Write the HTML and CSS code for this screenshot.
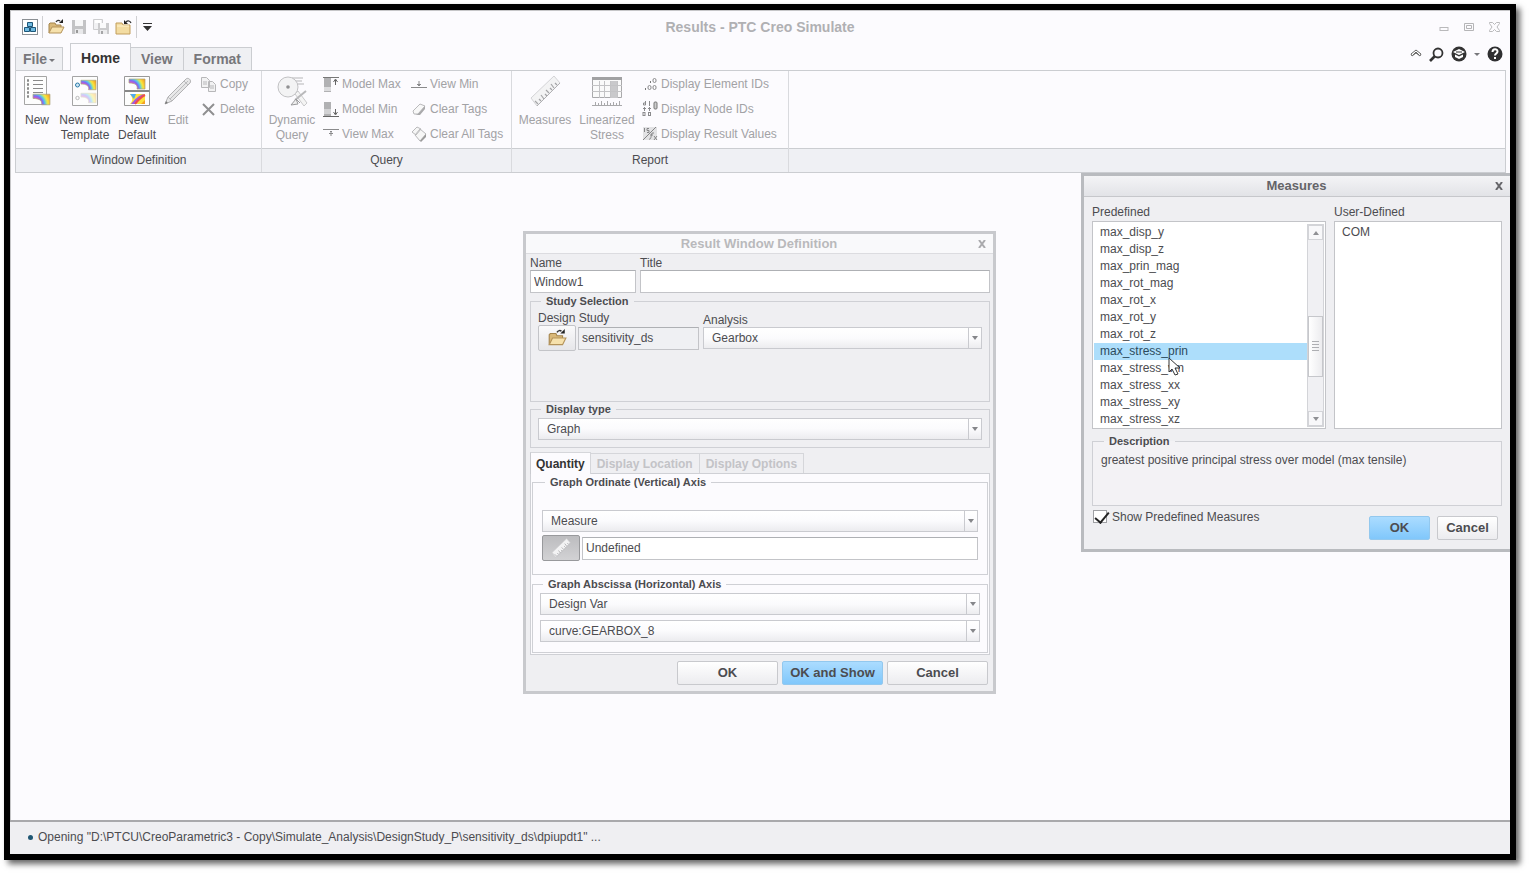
FILE: index.html
```
<!DOCTYPE html>
<html lang="en">

<head>
    <meta charset="UTF-8">
    <meta name="viewport" content="width=device-width, initial-scale=1.0">
    <title>Results - PTC Creo Simulate</title>
    <link rel="stylesheet" href="styles.css">
</head>

<body>
    <!-- shared icon shapes -->
    <svg class="defs" aria-hidden="true">
        <defs>
            <radialGradient id="heat" gradientUnits="userSpaceOnUse" cx="2" cy="11" r="17">
                <stop offset="0.3" stop-color="#f08a9a" />
                <stop offset="0.4" stop-color="#c25ad6" />
                <stop offset="0.5" stop-color="#7f6cf0" />
                <stop offset="0.6" stop-color="#55c0f2" />
                <stop offset="0.7" stop-color="#b6e47c" />
                <stop offset="0.78" stop-color="#fbe23c" />
                <stop offset="1" stop-color="#f5a022" />
            </radialGradient>
            <linearGradient id="metal" x1="0" y1="0" x2="1" y2="1">
                <stop offset="0" stop-color="#ffffff" />
                <stop offset="1" stop-color="#cfcfd1" />
            </linearGradient>
            <symbol id="contour" viewBox="0 0 18 12">
                <path d="M1 1h16v10H9c1-4-2-6-8-6z" fill="url(#heat)" />
                <path d="M1 1h16v10H9c1-4-2-6-8-6z" fill="none" stroke="#a9a27a" stroke-width="0.7" />
            </symbol>
            <symbol id="folder" viewBox="0 0 18 16">
                <path d="M2 14V5l1-1h5l1 2h5v3" fill="#d9b878" stroke="#a5854c" />
                <path d="M2 14l3-6h12l-3 6z" fill="#f6e1ac" stroke="#b4935a" />
                <path d="M9 3c1-2 3-2 4-1" fill="none" stroke="#333" stroke-width="1.3" />
                <path d="M12 4h4V0z" fill="#222" />
            </symbol>
            <symbol id="ruler" viewBox="0 0 32 32">
                <path d="M2 23L25 1l6 7L8 31z" fill="#f3f3f4" stroke="#d3d3d6" />
                <path d="M8 31L31 8" stroke="#b1b1b4" />
                <path d="M9 29l-3-3M12 26l-2-2M15 24l-3-4M18 21l-2-2M20 18l-3-3M23 15l-2-2M25 13l-3-4M28 10l-2-2" stroke="#a4a4a7" stroke-width="1.2" />
            </symbol>
            <symbol id="eraser" viewBox="0 0 16 14">
                <path d="M2 9l7-7 5 2-7 8H3z" fill="#f8f8f8" stroke="#b9b9bb" />
                <path d="M7 12l7-8v3l-5 6H4" fill="#a9a9ab" />
            </symbol>
        </defs>
    </svg>

    <main class="window">
        <header class="titlebar">
            <div class="quick-access">
                <button class="tool app-tool" aria-label="Application menu">
                    <svg width="16" height="16" viewBox="0 0 16 16">
                        <rect x="0.5" y="0.5" width="15" height="15" fill="#fff" stroke="#8b8f94" />
                        <path d="M5.500 3.500h5v4h-5zM2.500 8.500h5v4h-5zM8.500 8.500h5v4h-5z" fill="#6fb9e0" stroke="#1d5679" />
                    </svg>
                </button>
                <span class="divider"></span>
                <button class="tool" aria-label="Open"><svg width="18" height="16"><use href="#folder" /></svg></button>
                <button class="tool" aria-label="Save" disabled>
                    <svg width="16" height="16" viewBox="0 0 16 16">
                        <path d="M1 1h14v14H1z" fill="#c3c3c5" />
                        <path d="M4 1h8v6H4z" fill="#f7f7f8" />
                        <path d="M4 10h8v5H4z" fill="#e9e9eb" />
                        <path d="M5 11h2v3H5z" fill="#999" />
                    </svg>
                </button>
                <button class="tool" aria-label="Save a copy" disabled>
                    <svg width="16" height="16" viewBox="0 0 16 16">
                        <path d="M0.500 0.500h9v10h-9z" fill="#f1f1f3" stroke="#cdcdcf" />
                        <path d="M2 1h6v3H2z" fill="#fff" />
                        <path d="M5 4h11v11H5z" fill="#cbcbcd" />
                        <path d="M7 4h6v5H7z" fill="#fafafb" />
                        <path d="M7 11h7v4H7z" fill="#ececee" />
                        <path d="M8 12h2v3H8z" fill="#a5a5a7" />
                    </svg>
                </button>
                <button class="tool" aria-label="Close results">
                    <svg width="17" height="16" viewBox="0 0 17 16">
                        <path d="M1 15V4h6l1 2h7v9z" fill="#f3dca2" stroke="#c29e5c" />
                        <path d="M2 7h12" stroke="#fff3cf" />
                        <path d="M11 3c2-2 4-1 5 1" fill="none" stroke="#333" stroke-width="1.3" />
                        <path d="M9 1v4h4z" fill="#222" />
                    </svg>
                </button>
                <span class="divider"></span>
                <button class="tool more-tool" aria-label="Customize toolbar">
                    <svg width="9" height="8" viewBox="0 0 9 8"><path d="M0 0h9v1H0zM0 3h9L4.500 8z" fill="#333" /></svg>
                </button>
            </div>
            <h1>Results - PTC Creo Simulate</h1>
            <div class="window-controls">
                <button class="tool" aria-label="Minimize"><svg width="10" height="12" viewBox="0 0 10 12"><rect x="1" y="6.500" width="8" height="3" fill="none" stroke="#b9b9bb" /></svg></button>
                <button class="tool" aria-label="Restore"><svg width="10" height="10" viewBox="0 0 10 10"><path d="M0.500 1.500h9v7h-9zM2.500 3.500h5v3h-5z" fill="none" stroke="#b5b5b7" /></svg></button>
                <button class="tool" aria-label="Close"><svg width="11" height="10" viewBox="0 0 11 10"><path d="M0.500 0.500h3l2 2 2-2h3v1L8 5l2.500 3.500v1h-3l-2-2-2 2h-3v-1L3 5 0.500 1.500z" fill="none" stroke="#b9b9bb" /></svg></button>
            </div>
        </header>

        <nav class="tab-row">
            <button class="tab file-tab">File <span class="caret"></span></button>
            <button class="tab active">Home</button>
            <button class="tab">View</button>
            <button class="tab">Format</button>
            <div class="help-tools">
                <button class="tool" aria-label="Collapse ribbon"><svg width="12" height="10" viewBox="0 0 12 10"><path d="M1 5l5-4 5 4-1 2-4-3-4 3zM3 6l3-3 3 3" fill="#fff" stroke="#666" /></svg></button>
                <button class="tool" aria-label="Search"><svg width="15" height="15" viewBox="0 0 15 15"><circle cx="9" cy="6" r="4.500" fill="none" stroke="#333" stroke-width="1.800" /><path d="M6 9l-5 5" stroke="#333" stroke-width="2.600" /></svg></button>
                <button class="tool" aria-label="Learning">
                    <svg width="16" height="16" viewBox="0 0 16 16"><circle cx="8" cy="8" r="7.500" fill="#333" /><path d="M8 3l6 3-6 3-6-3z" fill="#fff" /><path d="M4 8.500l4 2 4-2V11l-4 2-4-2z" fill="#fff" /><path d="M5 6h6" stroke="#333" /></svg>
                </button>
                <span class="caret"></span>
                <button class="tool" aria-label="Help"><svg width="16" height="16" viewBox="0 0 16 16"><circle cx="8" cy="8" r="7.500" fill="#2f2f31" /><path d="M5.500 6c0-3.500 5-3.500 5-.5 0 2-2.500 2-2.500 4" fill="none" stroke="#fff" stroke-width="2" /><path d="M7 11h2v2H7z" fill="#fff" /></svg></button>
            </div>
        </nav>

        <section class="ribbon">
            <div class="group definition-group">
                <div class="group-tools">
                    <button class="big-tool new-tool">
                        <svg width="28" height="32" viewBox="0 0 28 32">
                            <path d="M1.500 1.500h22v28h-22z" fill="#fdfdfd" stroke="#a5a5a5" />
                            <path d="M10 5.500h10M10 9.500h10M10 13.500h10M10 17.500h10" stroke="#8a8a8a" />
                            <path d="M4 5.500h3M4 9.500h3M4 13.500h3M4 17.500h3M4 21.500h3" stroke="#8a8a8a" stroke-width="2.400" stroke-dasharray="2 1" />
                            <use href="#contour" x="9" y="18" width="19" height="13" />
                        </svg>
                        <span>New</span>
                    </button>
                    <button class="big-tool template-tool">
                        <svg width="28" height="32" viewBox="0 0 28 32">
                            <path d="M1.500 1.500h25v29h-25z" fill="#fdfdfd" stroke="#a5a5a5" />
                            <circle cx="6.500" cy="10" r="2" fill="#cfe7f5" stroke="#2d7ba8" />
                            <use href="#contour" x="9" y="4" width="17" height="12" />
                            <circle cx="6.500" cy="23" r="1.700" fill="none" stroke="#b9b9b9" />
                            <use href="#contour" x="9" y="17" width="17" height="12" opacity="0.35" />
                        </svg>
                        <span>New from<br>Template</span>
                    </button>
                    <button class="big-tool default-tool">
                        <svg width="28" height="32" viewBox="0 0 28 32">
                            <path d="M1.500 1.500h25v14h-25zM1.500 16.500h25v14h-25z" fill="#fdfdfd" stroke="#999" />
                            <path d="M1 16h26" stroke="#777" />
                            <use href="#contour" x="5" y="3" width="18" height="12" />
                            <path d="M7 19h15v10H7c4-4 2-7 0-10z" fill="#fbe23c" />
                            <path d="M7 19h6l-2 5c-1-1-3-4-4-5z" fill="#4fa8ee" />
                            <path d="M8 29c3-4 8-9 13-10l-8 10z" fill="#a05be0" />
                            <path d="M12 29c3-4 6-7 10-9" fill="none" stroke="#ee4e4e" stroke-width="2" />
                            <path d="M18 29l4-4v4z" fill="#f5a022" />
                        </svg>
                        <span>New<br>Default</span>
                    </button>
                    <button class="big-tool edit-tool" disabled>
                        <svg width="28" height="32" viewBox="0 0 28 32">
                            <path d="M1 29l3-7L22 4c2-2 6 1 4 4L8 26z" fill="url(#metal)" stroke="#b1b1b3" />
                            <path d="M4 22l4 4M20 6l4 4M6 24L24 6" stroke="#bdbdbf" />
                            <path d="M1 29l1-3 2 2z" fill="#777" />
                        </svg>
                        <span>Edit</span>
                    </button>
                    <div class="small-tools">
                        <button class="small-tool" disabled>
                            <svg width="16" height="16" viewBox="0 0 16 16"><path d="M0.500 1.500h5l3 3v7h-8zM7.500 5.500h4l3 3v7h-7z" fill="#f2f2f3" stroke="#b7b7b9" /><path d="M2 6h4M2 8h4M9 10h4M9 12h4" stroke="#b7b7b9" /></svg>
                            Copy
                        </button>
                        <button class="small-tool" disabled>
                            <svg width="16" height="16" viewBox="0 0 16 16"><path d="M2 3l11 11M13 3L2 14" stroke="#8f8f91" stroke-width="2" /></svg>
                            Delete
                        </button>
                    </div>
                </div>
                <h2>Window Definition</h2>
            </div>

            <div class="group query-group">
                <div class="group-tools">
                    <button class="big-tool query-tool" disabled>
                        <svg width="32" height="32" viewBox="0 0 32 32">
                            <path d="M16 3h11M18 6h8M20 9h8" stroke="#b5b5b7" />
                            <circle cx="12" cy="12" r="10" fill="#f3f3f4" stroke="#c1c1c3" />
                            <circle cx="12" cy="12" r="1.800" fill="#8f8f91" />
                            <path d="M19 19l3-3 9 12-3 3z" fill="#f4f4f4" stroke="#c9c9cb" />
                            <path d="M19 25l11-9" stroke="#b9b9bb" stroke-width="2" />
                            <path d="M15 30l5-6 2 5zM20 24l4 4" fill="#eee" stroke="#9b9b9d" />
                        </svg>
                        <span>Dynamic<br>Query</span>
                    </button>
                    <div class="small-tools model-tools">
                        <button class="small-tool" disabled>
                            <svg width="16" height="16" viewBox="0 0 16 16"><path d="M0 1.500h16" stroke="#777" /><path d="M1 2h7v14H1z" fill="#b1b1b3" /><path d="M1 11h7v4H1z" fill="#dcdcde" /><path d="M12.500 9V4M10.500 6l2-3 2 3" fill="none" stroke="#666" /></svg>
                            Model Max
                        </button>
                        <button class="small-tool" disabled>
                            <svg width="16" height="16" viewBox="0 0 16 16"><path d="M1 1h7v14H1z" fill="#b1b1b3" /><path d="M1 8h7v5H1z" fill="#d2d2d4" /><path d="M0 15.500h16M12.500 8v5M10.500 11l2 3 2-3" fill="none" stroke="#666" /></svg>
                            Model Min
                        </button>
                        <button class="small-tool" disabled>
                            <svg width="16" height="16" viewBox="0 0 16 16"><path d="M0 3.500h16M8 5v5M6 7.500h4M7 6l1-1 1 1" fill="none" stroke="#8a8a8c" /></svg>
                            View Max
                        </button>
                    </div>
                    <div class="small-tools">
                        <button class="small-tool" disabled>
                            <svg width="16" height="16" viewBox="0 0 16 16"><path d="M0 11.500h16M8 5v5M6 8.500h4M7 9l1 1 1-1" fill="none" stroke="#8a8a8c" /></svg>
                            View Min
                        </button>
                        <button class="small-tool" disabled>
                            <svg width="16" height="14"><use href="#eraser" /></svg>
                            Clear Tags
                        </button>
                        <button class="small-tool" disabled>
                            <svg width="16" height="16" viewBox="0 0 16 16"><path d="M1 6l5-5 4 2-5 6zM4 9l5-6 6 5-6 7z" fill="#f6f6f6" stroke="#b9b9bb" /><path d="M9 15l6-7v3l-5 5z" fill="#999" /></svg>
                            Clear All Tags
                        </button>
                    </div>
                </div>
                <h2>Query</h2>
            </div>

            <div class="group report-group">
                <div class="group-tools">
                    <button class="big-tool measures-tool" disabled>
                        <svg width="32" height="32"><use href="#ruler" /></svg>
                        <span>Measures</span>
                    </button>
                    <button class="big-tool stress-tool" disabled>
                        <svg width="32" height="32" viewBox="0 0 32 32">
                            <path d="M1.500 2.500h29v20h-29z" fill="#fafafa" stroke="#a9a9ab" />
                            <path d="M1 2h30v3H1z" fill="#a1a1a3" />
                            <path d="M19 6h7v17h-7z" fill="#c9c9cb" />
                            <path d="M1 10.500h30M1 16.500h30M8.500 6v17M13.500 6v17M19.500 6v17M26.500 6v17" stroke="#c3c3c5" />
                            <path d="M1 30.500h30M4.500 27v3M7.500 28v2M10.500 26v4M13.500 28v2M16.500 26v4M19.500 28v2M22.500 27v3M25.500 28v2M28.500 26v4" stroke="#a9a9ab" />
                        </svg>
                        <span>Linearized<br>Stress</span>
                    </button>
                    <div class="small-tools">
                        <button class="small-tool" disabled>
                            <svg width="16" height="16" viewBox="0 0 16 16"><path d="M3 13h1M8 6h1" stroke="#777" stroke-width="2" /><rect x="11" y="2.500" width="3" height="4" rx="1.500" fill="none" stroke="#8a8a8c" /><rect x="6" y="9.500" width="3" height="4" rx="1.500" fill="none" stroke="#8a8a8c" /><rect x="11" y="9.500" width="3" height="4" rx="1.500" fill="none" stroke="#8a8a8c" /></svg>
                            Display Element IDs
                        </button>
                        <button class="small-tool" disabled>
                            <svg width="16" height="16" viewBox="0 0 16 16"><path d="M3.500 0v4h-2V2h2M7.500 0v5M2.500 6v4M1 7.500h3M7.500 6v4M6 7.500h3" fill="none" stroke="#8a8a8c" /><rect x="1" y="11.500" width="2" height="3" fill="none" stroke="#8a8a8c" /><rect x="6.500" y="11.500" width="2" height="3" fill="none" stroke="#8a8a8c" /><rect x="12" y="1" width="3" height="7" rx="1" fill="#ccc" stroke="#777" /></svg>
                            Display Node IDs
                        </button>
                        <button class="small-tool" disabled>
                            <svg width="16" height="16" viewBox="0 0 16 16"><path d="M1 1h14v13H1z" fill="#e2e2e4" /><path d="M2.500 2v4M7 2.500H5v2h2v2H5M1 14L14 1M7 13c2 1 2-3 3-6h2M8 9h3M12 10l3 4M15 10l-3 4" fill="none" stroke="#858587" /></svg>
                            Display Result Values
                        </button>
                    </div>
                </div>
                <h2>Report</h2>
            </div>
            <div class="group empty-group"><div class="group-tools"></div><h2></h2></div>
        </section>

        <section class="workspace">
            <form class="dialog result-dialog">
                <header class="dialog-title">
                    <h2>Result Window Definition</h2>
                    <button type="button" class="close-button" aria-label="Close"><svg width="8" height="8" viewBox="0 0 8 8"><path d="M1 0l6 8M7 0L1 8" stroke="currentColor" stroke-width="2" /></svg></button>
                </header>
                <div class="dialog-body">
                    <div class="name-row">
                        <label class="name-field">Name<input type="text" value="Window1"></label>
                        <label class="title-field">Title<input type="text"></label>
                    </div>
                    <fieldset class="study-box">
                        <legend>Study Selection</legend>
                        <div class="study-row">
                            <div class="study-field">
                                <label for="study">Design Study</label>
                                <div class="picker">
                                    <button type="button" class="icon-button" aria-label="Open study"><svg width="20" height="18"><use href="#folder" /></svg></button>
                                    <input type="text" id="study" class="readonly" value="sensitivity_ds" readonly>
                                </div>
                            </div>
                            <div class="analysis-field">
                                <label for="analysis">Analysis</label>
                                <div class="combo"><select id="analysis"><option>Gearbox</option></select></div>
                            </div>
                        </div>
                    </fieldset>
                    <fieldset class="display-box">
                        <legend>Display type</legend>
                        <div class="combo"><select aria-label="Display type"><option>Graph</option></select></div>
                    </fieldset>
                    <div class="dialog-tabs">
                        <button type="button" class="dialog-tab active">Quantity</button>
                        <button type="button" class="dialog-tab" disabled>Display Location</button>
                        <button type="button" class="dialog-tab" disabled>Display Options</button>
                    </div>
                    <div class="tab-panel">
                        <fieldset class="ordinate-box">
                            <legend>Graph Ordinate (Vertical) Axis</legend>
                            <div class="combo"><select aria-label="Ordinate quantity"><option>Measure</option></select></div>
                            <div class="picker">
                                <button type="button" class="icon-button pressed" aria-label="Select measure"><svg width="20" height="20"><use href="#ruler" /></svg></button>
                                <input type="text" aria-label="Selected measure" value="Undefined">
                            </div>
                        </fieldset>
                        <fieldset class="abscissa-box">
                            <legend>Graph Abscissa (Horizontal) Axis</legend>
                            <div class="combo"><select aria-label="Abscissa quantity"><option>Design Var</option></select></div>
                            <div class="combo"><select aria-label="Design variable"><option>curve:GEARBOX_8</option></select></div>
                        </fieldset>
                    </div>
                    <div class="dialog-buttons">
                        <button type="button" class="push">OK</button>
                        <button type="button" class="push primary">OK and Show</button>
                        <button type="button" class="push">Cancel</button>
                    </div>
                </div>
            </form>

            <form class="dialog measures-dialog">
                <header class="dialog-title">
                    <h2>Measures</h2>
                    <button type="button" class="close-button" aria-label="Close"><svg width="8" height="8" viewBox="0 0 8 8"><path d="M1 0l6 8M7 0L1 8" stroke="currentColor" stroke-width="2" /></svg></button>
                </header>
                <div class="dialog-body">
                    <div class="lists">
                        <div class="predefined">
                            <h3 id="predefined-label">Predefined</h3>
                            <div class="list-box">
                                <ul role="listbox" aria-labelledby="predefined-label">
                                    <li role="option">max_disp_y</li>
                                    <li role="option">max_disp_z</li>
                                    <li role="option">max_prin_mag</li>
                                    <li role="option">max_rot_mag</li>
                                    <li role="option">max_rot_x</li>
                                    <li role="option">max_rot_y</li>
                                    <li role="option">max_rot_z</li>
                                    <li role="option" class="selected" aria-selected="true">max_stress_prin</li>
                                    <li role="option">max_stress_vm</li>
                                    <li role="option">max_stress_xx</li>
                                    <li role="option">max_stress_xy</li>
                                    <li role="option">max_stress_xz</li>
                                </ul>
                                <div class="scrollbar">
                                    <button type="button" class="scroll-button up" aria-label="Scroll up"></button>
                                    <div class="track"><div class="thumb"></div></div>
                                    <button type="button" class="scroll-button down" aria-label="Scroll down"></button>
                                </div>
                            </div>
                        </div>
                        <div class="user-defined">
                            <h3 id="user-label">User-Defined</h3>
                            <div class="list-box">
                                <ul role="listbox" aria-labelledby="user-label">
                                    <li role="option">COM</li>
                                </ul>
                            </div>
                        </div>
                    </div>
                    <fieldset class="description-box">
                        <legend>Description</legend>
                        <p>greatest positive principal stress over model (max tensile)</p>
                    </fieldset>
                    <div class="measures-footer">
                        <label class="check"><input type="checkbox" checked>Show Predefined Measures</label>
                        <div class="dialog-buttons">
                            <button type="button" class="push primary">OK</button>
                            <button type="button" class="push">Cancel</button>
                        </div>
                    </div>
                </div>
                <svg class="pointer" width="14" height="20" viewBox="0 0 14 20" aria-hidden="true"><path d="M1 1v14l3-3 3 6 3-1-3-6h5z" fill="#fff" stroke="#333" /></svg>
            </form>
        </section>

        <footer class="status">
            <span class="dot"></span>
            <p>Opening "D:\PTCU\CreoParametric3 - Copy\Simulate_Analysis\DesignStudy_P\sensitivity_ds\dpiupdt1" ...</p>
        </footer>
    </main>
</body>

</html>
```
FILE: styles.css
```
* {
    box-sizing: border-box;
}

body {
    display: flex;
    min-height: 100vh;
    margin: 0;
    padding: 4px 13px 13px 4px;
    background: #fff;
    color: #4c4c50;
    font-family: "Liberation Sans", Arial, sans-serif;
    font-size: 12px;
    line-height: 14px;
}

h1, h2, h3, p, ul {
    margin: 0;
    padding: 0;
    font-size: 12px;
    font-weight: normal;
}

button, input, select {
    margin: 0;
    color: inherit;
    font: inherit;
}

.defs {
    position: absolute;
    width: 0;
    height: 0;
}

.window {
    flex: 1;
    display: flex;
    flex-direction: column;
    min-width: 0;
    border: 6px solid #000;
    background: #fcfbfe;
    box-shadow: 4px 4px 6px rgba(0, 0, 0, 0.6), inset 1px 1px 0 #c6c6c8;
}

/* Title bar */
.titlebar {
    display: grid;
    grid-template-columns: 1fr auto 1fr;
    align-items: center;
    height: 33px;
}

.titlebar h1 {
    color: #b0b0b3;
    font-size: 14px;
    font-weight: bold;
}

.quick-access {
    display: flex;
    align-items: center;
    gap: 6px;
    padding-left: 12px;
}

.tool {
    display: flex;
    padding: 0;
    border: 0;
    background: none;
}

.divider {
    width: 1px;
    height: 22px;
    margin: 0 -2px;
    background: #cfcfd2;
}

.more-tool {
    margin-left: 2px;
}

.window-controls {
    display: flex;
    justify-content: flex-end;
    align-items: center;
    gap: 15px;
    padding-right: 10px;
}

/* Tabs */
.tab-row {
    display: flex;
    align-items: flex-end;
    height: 27px;
    padding: 0 7px 0 5px;
}

.tab {
    height: 23px;
    padding: 0 10px;
    border: 1px solid #cbcdd1;
    border-left: 0;
    border-bottom: 0;
    background: #eff0f3;
    color: #77777b;
    font-size: 14px;
    font-weight: bold;
}

.tab.active {
    position: relative;
    height: 28px;
    margin-bottom: -1px;
    border-left: 1px solid #cbcdd1;
    background: #fcfbfe;
    color: #333;
}

.file-tab {
    margin-right: 7px;
    padding: 0 7px;
    border-left: 1px solid #cbcdd1;
}

.caret {
    display: inline-block;
    border: 3px solid transparent;
    border-top-color: #77777b;
    border-bottom: 0;
    vertical-align: middle;
}

.file-tab .caret {
    margin-left: -2px;
}

.help-tools {
    display: flex;
    align-items: center;
    gap: 7px;
    height: 32px;
    margin-left: auto;
}

/* Ribbon */
.ribbon {
    display: flex;
    margin: 0 4px 0 5px;
    border: 1px solid #cbcdd1;
}

.group {
    display: flex;
    flex-direction: column;
    border-right: 1px solid #d9dade;
}

.definition-group {
    width: 246px;
}

.query-group {
    width: 250px;
}

.report-group {
    width: 277px;
}

.empty-group {
    flex: 1;
    border-right: 0;
}

.group-tools {
    display: flex;
    height: 77px;
    padding-top: 2px;
}

.group h2 {
    height: 24px;
    border-top: 1px solid #cbcdd1;
    background: #eff0f4;
    line-height: 23px;
    text-align: center;
}

.big-tool {
    display: flex;
    flex-direction: column;
    align-items: center;
    gap: 6px;
    padding: 2px 0 0;
    border: 0;
    background: none;
    line-height: 15px;
    white-space: nowrap;
}

.big-tool:disabled,
.small-tool:disabled {
    color: #a2a2a5;
}

.new-tool {
    width: 42px;
}

.template-tool {
    width: 54px;
}

.default-tool {
    width: 50px;
}

.edit-tool {
    width: 32px;
    margin-right: 7px;
}

.query-tool {
    width: 60px;
    margin-right: 1px;
}

.measures-tool {
    width: 66px;
}

.stress-tool {
    width: 58px;
    margin-right: 6px;
}

.small-tools {
    display: flex;
    flex-direction: column;
}

.model-tools {
    width: 88px;
}

.small-tool {
    display: flex;
    align-items: center;
    gap: 3px;
    height: 25px;
    padding: 0 0 4px;
    border: 0;
    background: none;
    white-space: nowrap;
}

/* Workspace and dialogs */
.workspace {
    position: relative;
    flex: 1;
    overflow: hidden;
}

.dialog {
    position: absolute;
    border: 3px solid #c8c9cd;
    background: #efeff2;
}

.dialog-title {
    display: flex;
    align-items: center;
    height: 20px;
    border-bottom: 1px solid #dcdce0;
}

.dialog-title h2 {
    flex: 1;
    padding-left: 14px;
    font-size: 13px;
    font-weight: bold;
    text-align: center;
}

.close-button {
    display: flex;
    padding: 0;
    border: 0;
    background: none;
}

fieldset {
    min-width: 0;
    margin: 0;
    padding: 0;
    border: 1px solid #cfd0d5;
}

legend {
    margin-left: 3px;
    padding: 0 5px;
    font-size: 11px;
    font-weight: bold;
    line-height: 14px;
}

input[type="text"] {
    display: block;
    width: 100%;
    height: 23px;
    padding: 0 3px;
    border: 1px solid #c3c4c8;
    border-top-color: #aeb0b4;
    border-radius: 0;
    background: #fff;
}

input.readonly {
    background: #eff0f3;
}

.combo {
    position: relative;
    height: 22px;
}

.combo select {
    width: 100%;
    height: 100%;
    padding: 0 8px;
    border: 1px solid #c9cacf;
    border-radius: 0;
    background: linear-gradient(#fff, #fbfbfd 50%, #ececef);
    appearance: none;
}

.combo::before {
    content: "";
    position: absolute;
    top: 1px;
    right: 13px;
    bottom: 1px;
    border-left: 1px solid #c9cacf;
    pointer-events: none;
}

.combo::after {
    content: "";
    position: absolute;
    top: 9px;
    right: 4px;
    border: 3px solid transparent;
    border-top: 4px solid #85868a;
    border-bottom: 0;
    pointer-events: none;
}

.picker {
    display: flex;
    align-items: center;
    gap: 2px;
}

.icon-button {
    display: flex;
    flex: none;
    align-items: center;
    justify-content: center;
    width: 38px;
    height: 26px;
    padding: 0;
    border: 1px solid #c3c4c8;
    border-radius: 2px;
    background: linear-gradient(#fafafb, #e6e6e9);
}

.icon-button.pressed {
    border-color: #98999c;
    background: linear-gradient(#bcbcbf, #d2d2d4);
}

.push {
    width: 101px;
    height: 24px;
    padding: 0;
    border: 1px solid #c8c9cd;
    border-radius: 2px;
    background: linear-gradient(#fff, #ececef);
    font-size: 13px;
    font-weight: bold;
}

.push.primary {
    border-color: #93c8ee;
    background: linear-gradient(#abdcff, #80c7fb);
}

.dialog-buttons {
    display: flex;
    justify-content: flex-end;
    gap: 4px;
}

/* Result Window Definition */
.result-dialog {
    top: 58px;
    left: 513px;
    width: 473px;
}

.result-dialog .dialog-title {
    background: #f9f9fb;
    color: #b9b9bc;
}

.result-dialog .close-button {
    margin-right: 7px;
    color: #aaaaad;
}

.result-dialog .dialog-body {
    padding: 2px 3px 6px 4px;
}

.result-dialog .dialog-buttons {
    padding-right: 2px;
}

.name-row {
    display: flex;
    gap: 4px;
    margin-bottom: 1px;
}

.name-field {
    width: 106px;
}

.title-field {
    flex: 1;
}

.study-box {
    min-height: 108px;
    padding: 0 7px;
}

.study-row {
    display: flex;
    gap: 4px;
    padding-top: 3px;
}

.study-field {
    width: 161px;
}

.study-row label {
    display: block;
}

.analysis-field {
    flex: 1;
    padding-top: 2px;
}

.display-box {
    padding: 2px 7px 7px;
}

.dialog-tabs {
    display: flex;
    align-items: flex-end;
    margin-top: 4px;
}

.dialog-tab {
    height: 20px;
    padding: 0 6px;
    border: 1px solid #d5d6da;
    border-left: 0;
    border-bottom: 0;
    background: #efeff2;
    color: #c3c3c7;
    font-weight: bold;
}

.dialog-tab.active {
    position: relative;
    height: 22px;
    margin-bottom: -1px;
    padding: 0 5px;
    border-left: 1px solid #c9cacf;
    background: #fcfbfe;
    color: #333;
}

.tab-panel {
    margin-bottom: 6px;
    padding: 1px;
    border: 1px solid #cfd0d5;
    background: #fcfbfe;
}

.ordinate-box {
    margin-bottom: 2px;
    padding: 21px 9px 13px;
}

.ordinate-box .combo {
    margin-bottom: 3px;
}

.abscissa-box {
    padding: 2px 7px 10px;
}

.abscissa-box .combo + .combo {
    margin-top: 5px;
}

/* Measures */
.measures-dialog {
    top: 0;
    right: 0;
    width: 429px;
    border-color: #b9bbbf;
    border-right: 0;
}

.measures-dialog .dialog-title {
    height: 21px;
    background: linear-gradient(#f4f4f6, #e2e3e7);
    border-color: #c6c7cb;
    color: #646468;
}

.measures-dialog .close-button {
    margin-right: 7px;
    color: #66666a;
}

.measures-dialog .dialog-body {
    padding: 8px 8px 9px;
}

.lists {
    display: flex;
    gap: 8px;
    margin-bottom: 5px;
}

.lists h3 {
    margin-bottom: 2px;
}

.predefined {
    width: 234px;
}

.user-defined {
    flex: 1;
}

.list-box {
    display: flex;
    height: 208px;
    padding: 2px 1px 0;
    border: 1px solid #c3c4c8;
    background: #fff;
}

.list-box ul {
    flex: 1;
    list-style: none;
}

.list-box li {
    padding-left: 6px;
    line-height: 17px;
}

.list-box .selected {
    background: #addefb;
    color: #2c4a5c;
}

.scrollbar {
    display: flex;
    flex-direction: column;
    width: 17px;
    margin-bottom: 1px;
    border: 1px solid #d3d4d8;
    background: #f0f0f3;
}

.scroll-button {
    display: flex;
    align-items: center;
    justify-content: center;
    height: 15px;
    padding: 0;
    border: 1px solid #d3d4d8;
    background: #f8f8fa;
}

.scroll-button::before {
    content: "";
    border: 3px solid transparent;
}

.scroll-button.up::before {
    border-bottom: 4px solid #8f9094;
    border-top: 0;
}

.scroll-button.down::before {
    border-top: 4px solid #8f9094;
    border-bottom: 0;
}

.track {
    flex: 1;
    padding-top: 76px;
}

.thumb {
    display: flex;
    align-items: center;
    justify-content: center;
    height: 61px;
    border: 1px solid #c6c7cb;
    background: linear-gradient(90deg, #fff, #ececef);
}

.thumb::before {
    content: "";
    width: 7px;
    height: 11px;
    background: repeating-linear-gradient(#aeafb3 0, #aeafb3 1px, transparent 1px, transparent 3px);
}

.description-box {
    min-height: 72px;
    margin-bottom: 3px;
    padding: 5px 8px;
    background: #f3f2f5;
}

.measures-footer {
    display: flex;
    justify-content: space-between;
}

.check {
    display: flex;
    align-items: center;
    gap: 5px;
    height: 15px;
}

.check input {
    position: relative;
    width: 14px;
    height: 13px;
    margin-left: 1px;
    border: 1px solid #9fa0a4;
    background: #fff;
    appearance: none;
}

.check input:checked::before {
    content: "";
    position: absolute;
    top: -2px;
    left: 4px;
    width: 6px;
    height: 12px;
    border: solid #222;
    border-width: 0 2px 2px 0;
    transform: rotate(40deg);
}

.measures-footer .dialog-buttons {
    gap: 7px;
    padding: 7px 4px 0 0;
}

.measures-footer .push {
    width: 61px;
}

.pointer {
    position: absolute;
    top: 181px;
    left: 84px;
}

/* Status bar */
.status {
    display: flex;
    align-items: center;
    gap: 5px;
    height: 34px;
    padding: 0 18px 2px;
    border-top: 2px solid #a9a9ac;
    background: #efeff2;
}

.dot {
    width: 5px;
    height: 5px;
    border-radius: 50%;
    background: #1f5673;
}
```
